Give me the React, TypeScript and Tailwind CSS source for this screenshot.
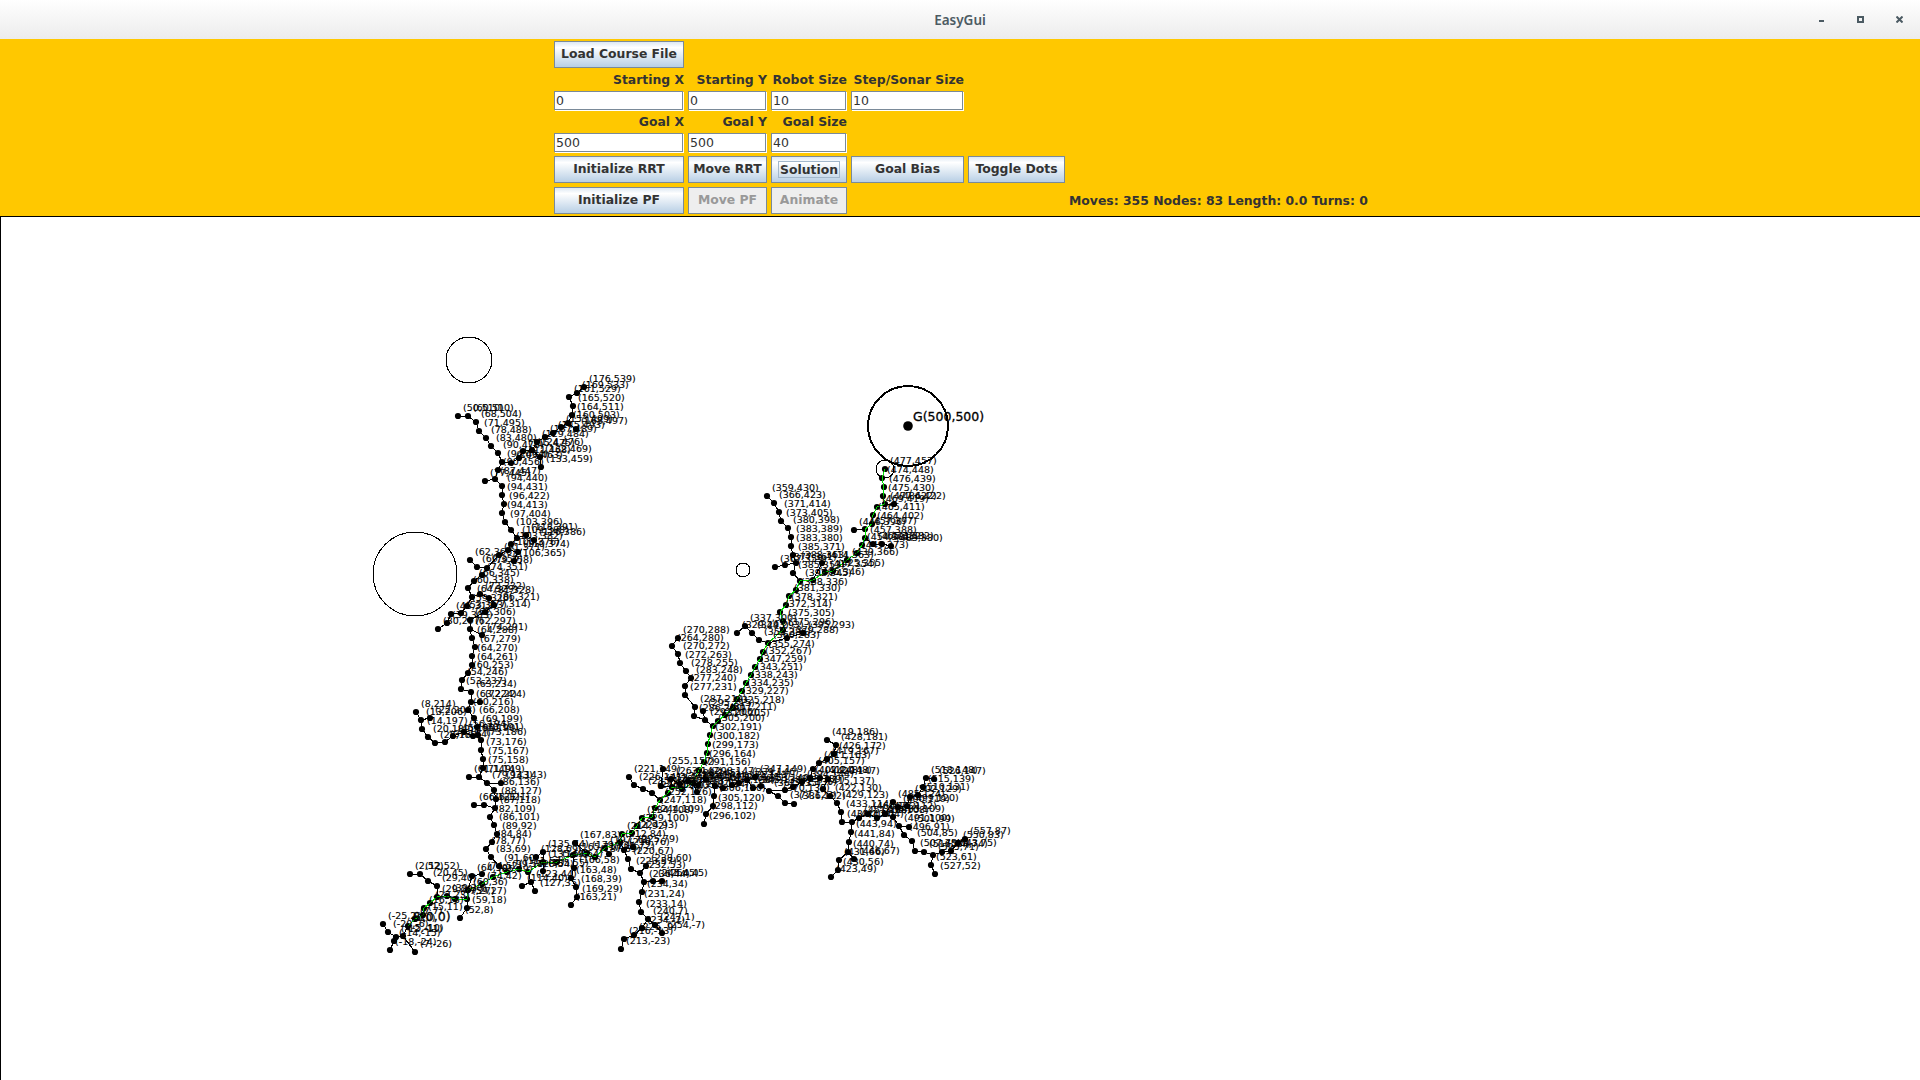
const DEJAVU = "font-['DejaVu_Sans',sans-serif]";

type Pt = [number, number];

// the path the planner found, start to goal
const solution: Pt[] = [
  [0, 0], [7, 7], [15, 11], [16, 18], [22, 23], [29, 29], [39, 30], [47, 27], [59, 27], [60, 36],
  [74, 42], [85, 49], [99, 54], [111, 57], [120, 54], [135, 64], [149, 64], [165, 71], [179, 73],
  [187, 69], [197, 78], [212, 84], [214, 92], [224, 93], [229, 100], [234, 108], [244, 109],
  [247, 118], [252, 126], [260, 133], [264, 139], [274, 137], [285, 143], [291, 156], [296, 164],
  [299, 173], [300, 182], [302, 191], [305, 200], [310, 205], [317, 211], [325, 218], [329, 227],
  [334, 235], [338, 243], [343, 251], [347, 259], [352, 267], [355, 274], [360, 283], [375, 296],
  [375, 305], [372, 314], [378, 321], [381, 330], [388, 336], [392, 345], [405, 346], [417, 354],
  [425, 355], [439, 366], [449, 373], [454, 381], [457, 388], [457, 397], [464, 402], [465, 411],
  [469, 419], [477, 422], [475, 430], [476, 439], [474, 448], [477, 457],
];

// side branches of the tree, each one a polyline
const branches: Pt[][] = [
  [[50, 510], [60, 510], [68, 504], [71, 495], [78, 488], [83, 480], [90, 473], [94, 464], [90, 456], [87, 447], [77, 445]],
  [[94, 464], [103, 463], [111, 468], [115, 475], [124, 476], [129, 484], [137, 489], [145, 493], [153, 499], [160, 503], [164, 511], [165, 520], [161, 529], [169, 533], [176, 539]],
  [[160, 503], [168, 497]],
  [[124, 476], [132, 469], [133, 459]],
  [[87, 447], [94, 440], [94, 431], [96, 422], [94, 413], [97, 404], [103, 396], [109, 388], [118, 391], [126, 386]],
  [[109, 388], [103, 382], [100, 376], [91, 371], [79, 358], [74, 351], [66, 345], [60, 338], [64, 329], [59, 320], [53, 313], [43, 312], [39, 303], [30, 297]],
  [[100, 376], [110, 374], [106, 365]],
  [[79, 358], [69, 359], [62, 366]],
  [[64, 329], [72, 332], [81, 328], [86, 321], [77, 314], [62, 306], [62, 297], [64, 288], [67, 279], [64, 270], [64, 261], [60, 253], [54, 246], [53, 237], [63, 234], [63, 224], [60, 216], [66, 208], [69, 199], [70, 191], [73, 186], [73, 176], [75, 167], [75, 158], [71, 149], [79, 143], [86, 136], [88, 127], [87, 118], [82, 109], [86, 101], [89, 92], [84, 84], [78, 77], [83, 69], [91, 60], [99, 54]],
  [[62, 297], [74, 291]],
  [[63, 224], [72, 224]],
  [[70, 191], [65, 190], [56, 194], [45, 190], [37, 184], [27, 183], [20, 189], [14, 197], [13, 206], [8, 214]],
  [[13, 206], [22, 208]],
  [[71, 149], [61, 149]],
  [[79, 143], [93, 143]],
  [[87, 118], [76, 121], [66, 121]],
  [[29, 29], [29, 40], [20, 45], [12, 52], [2, 52]],
  [[59, 27], [59, 18], [52, 8]],
  [[0, 0], [-5, -10], [-12, -11], [-20, -6], [-25, 2]],
  [[-12, -11], [-14, -15], [-18, -24]],
  [[-5, -10], [7, -26]],
  [[60, 36], [64, 50], [74, 52]],
  [[120, 54], [123, 44], [114, 40]],
  [[123, 44], [127, 35]],
  [[135, 64], [135, 74], [128, 69]],
  [[135, 64], [135, 55]],
  [[165, 71], [166, 58], [163, 48], [168, 39], [169, 29], [163, 21]],
  [[179, 73], [167, 83]],
  [[197, 78], [201, 72]],
  [[212, 84], [216, 76], [220, 67], [223, 57], [232, 53], [238, 60]],
  [[216, 76], [225, 79]],
  [[232, 53], [236, 44], [245, 45], [254, 45]],
  [[236, 44], [234, 34], [231, 24], [233, 14], [240, 7], [247, 1], [254, -7]],
  [[240, 7], [234, -2], [226, -9], [216, -13], [213, -23]],
  [[252, 126], [244, 133], [235, 137], [226, 141], [221, 149]],
  [[264, 139], [253, 140], [255, 157]],
  [[285, 143], [289, 134]],
  [[264, 139], [263, 147], [272, 142], [280, 145], [290, 141], [298, 147], [307, 140], [315, 138], [324, 141], [331, 143], [339, 146], [347, 149]],
  [[307, 140], [306, 130], [305, 120], [298, 112], [296, 102]],
  [[339, 146], [345, 138], [353, 140], [361, 135], [370, 130], [377, 123], [386, 122]],
  [[361, 135], [377, 136], [385, 139], [394, 144], [402, 148], [405, 157], [411, 163], [419, 167], [426, 172], [428, 181], [419, 186]],
  [[402, 148], [412, 148], [420, 147], [415, 137], [422, 130], [429, 123], [433, 114], [434, 104], [444, 104], [443, 94], [441, 84], [440, 74], [431, 66], [430, 56], [423, 49]],
  [[440, 74], [446, 67]],
  [[444, 104], [451, 108], [460, 112], [469, 108], [477, 112], [485, 109], [491, 100], [496, 91], [504, 85], [507, 75], [516, 74], [525, 71], [534, 74], [543, 75], [550, 83], [557, 87]],
  [[525, 71], [523, 61], [527, 52]],
  [[491, 100], [501, 99]],
  [[477, 112], [485, 124], [490, 119], [499, 120], [502, 129], [510, 131], [515, 139], [518, 148], [526, 147]],
  [[477, 422], [486, 422]],
  [[457, 397], [446, 396]],
  [[457, 388], [465, 382], [474, 382], [483, 380]],
  [[392, 345], [385, 353], [388, 363], [385, 371], [383, 380], [383, 389], [380, 398], [373, 405], [371, 414], [366, 423], [359, 430]],
  [[388, 363], [377, 361], [367, 359]],
  [[405, 346], [414, 363]],
  [[360, 283], [351, 286], [344, 293], [337, 300], [329, 293]],
  [[360, 283], [379, 288], [395, 293]],
  [[305, 200], [297, 206], [286, 210], [287, 219], [277, 231], [277, 240], [283, 248], [278, 255], [272, 263], [270, 272], [264, 280], [270, 288]],
  [[297, 206], [295, 215]],
];

// world coordinates to canvas pixels
const sx = (x: number) => x + 407;
const sy = (y: number) => 709 - y;
const toPoints = (line: Pt[]) => line.map(([x, y]) => `${sx(x)},${sy(y)}`).join(" ");

const allNodes: Pt[] = Array.from(
  new Map([...solution, ...branches.flat()].map((p) => [p.join(","), p] as [string, Pt])).values()
);

const TreeCanvas = () => (
  <svg viewBox="0 0 1919 863" className="block h-[863px] w-[1919px]">
    <g shapeRendering="crispEdges">
      <circle cx={sx(61)} cy={sy(566)} r={23} fill="none" stroke="black" />
      <circle cx={sx(7)} cy={sy(352)} r={42} fill="none" stroke="black" />
      <circle cx={sx(335)} cy={sy(356)} r={7} fill="none" stroke="black" />
      <circle cx={sx(477)} cy={sy(457)} r={9} fill="none" stroke="black" />
      <circle cx={sx(500)} cy={sy(500)} r={40} fill="none" stroke="black" strokeWidth={2} />
      {branches.map((line, i) => (
        <polyline key={i} points={toPoints(line)} fill="none" stroke="black" />
      ))}
    </g>
    <circle cx={sx(500)} cy={sy(500)} r={4.8} fill="black" />
    {allNodes.map(([x, y]) => (
      <circle key={`${x},${y}`} cx={sx(x)} cy={sy(y)} r={3.1} fill="black" />
    ))}
    <polyline points={toPoints(solution)} fill="none" stroke="#00e000" shapeRendering="crispEdges" />
    <g fontFamily="'DejaVu Sans', sans-serif" fontSize={9.5} fill="black" stroke="black" strokeWidth={0.12}>
      {allNodes.map(([x, y]) => (
        <text key={`${x},${y}`} x={sx(x) + 5} y={sy(y) - 5}>{`(${x},${y})`}</text>
      ))}
    </g>
    <g fontFamily="'DejaVu Sans', sans-serif" fontSize={12.5} fill="black" stroke="black" strokeWidth={0.3}>
      <text x={sx(500) + 5} y={sy(500) - 5}>G(500,500)</text>
      <text x={sx(0) + 5} y={sy(0) - 5}>S(0,0)</text>
    </g>
  </svg>
);

const SwingButton = ({
  label,
  disabled,
  focused,
}: {
  label: string;
  disabled?: boolean;
  focused?: boolean;
}) => (
  <button
    disabled={disabled}
    className={
      disabled
        ? "flex h-[27px] w-full items-center justify-center self-end border border-[#7a8a99] bg-[#eeeeee] text-[12.4px] font-bold text-[#999999]"
        : "flex h-[27px] w-full items-center justify-center self-end border border-[#7a8a99] bg-[linear-gradient(to_bottom,#dde8f3_0%,#ffffff_22%,#b8cfe5_100%)] text-[12.4px] font-bold text-[#333333]"
    }
  >
    {focused ? (
      <span className="border border-[#a3b8cc] px-[1px] leading-[15px]">{label}</span>
    ) : (
      label
    )}
  </button>
);

const FieldLabel = ({ children }: { children: string }) => (
  <div className="flex items-center justify-end whitespace-nowrap pt-[1px] text-[12.4px] font-bold text-[#333333]">
    {children}
  </div>
);

const Field = ({ value }: { value: string }) => (
  <input
    readOnly
    defaultValue={value}
    className="h-[19px] w-[calc(100%-1px)] border border-[#7a8a99] bg-white px-[1px] text-[12.5px] text-[#333333] shadow-[1px_1px_0_#ffffff] outline-none"
  />
);

const App = () => {
  return (
    <div className={`flex h-[1080px] w-[1920px] flex-col overflow-hidden bg-white ${DEJAVU}`}>
      {/* window title bar */}
      <div className="relative flex h-[39px] items-center justify-center bg-gradient-to-b from-white to-[#ececec] pt-[1px]">
        <span className="font-['Noto_Sans',sans-serif] text-[13.5px] font-semibold text-[#4c5b63]">EasyGui</span>
        <div className="absolute right-[17px] top-[16px] flex items-start gap-[32px]">
          <svg width="7" height="7" viewBox="0 0 7 7">
            <rect x="1" y="4" width="5" height="2" fill="#4c5b63" />
          </svg>
          <svg width="7" height="7" viewBox="0 0 7 7">
            <rect x="1" y="1" width="5" height="5" fill="none" stroke="#4c5b63" strokeWidth="2" />
          </svg>
          <svg width="7" height="7" viewBox="0 0 7 7">
            <path d="M0.5 0.5L6.5 6.5M6.5 0.5L0.5 6.5" stroke="#4c5b63" strokeWidth="2" />
          </svg>
        </div>
      </div>

      {/* control panel */}
      <div className="h-[178px] border-b border-black bg-[#ffc800] pl-[554px] pt-[2px]">
        <div className="grid grid-cols-[130px_79px_76px_113px_97px_auto] grid-rows-[27px_23px_19px_23px_19px_31px_31px] justify-start gap-x-[4px]">
          <SwingButton label="Load Course File" />
          <div className="col-span-5" />

          <FieldLabel>Starting X</FieldLabel>
          <FieldLabel>Starting Y</FieldLabel>
          <FieldLabel>Robot Size</FieldLabel>
          <FieldLabel>Step/Sonar Size</FieldLabel>
          <div className="col-span-2" />

          <Field value="0" />
          <Field value="0" />
          <Field value="10" />
          <Field value="10" />
          <div className="col-span-2" />

          <FieldLabel>Goal X</FieldLabel>
          <FieldLabel>Goal Y</FieldLabel>
          <FieldLabel>Goal Size</FieldLabel>
          <div className="col-span-3" />

          <Field value="500" />
          <Field value="500" />
          <Field value="40" />
          <div className="col-span-3" />

          <SwingButton label="Initialize RRT" />
          <SwingButton label="Move RRT" />
          <SwingButton label="Solution" focused />
          <SwingButton label="Goal Bias" />
          <SwingButton label="Toggle Dots" />
          <div />

          <SwingButton label="Initialize PF" />
          <SwingButton label="Move PF" disabled />
          <SwingButton label="Animate" disabled />
          <div className="col-span-2" />
          <div className="flex items-end whitespace-nowrap pb-[3px] text-[12.4px] font-bold text-[#333333]">
            Moves: 355 Nodes: 83 Length: 0.0 Turns: 0
          </div>
        </div>
      </div>

      {/* drawing area */}
      <div className="flex-1 border-l border-black">
        <TreeCanvas />
      </div>
    </div>
  );
};

export default App;
